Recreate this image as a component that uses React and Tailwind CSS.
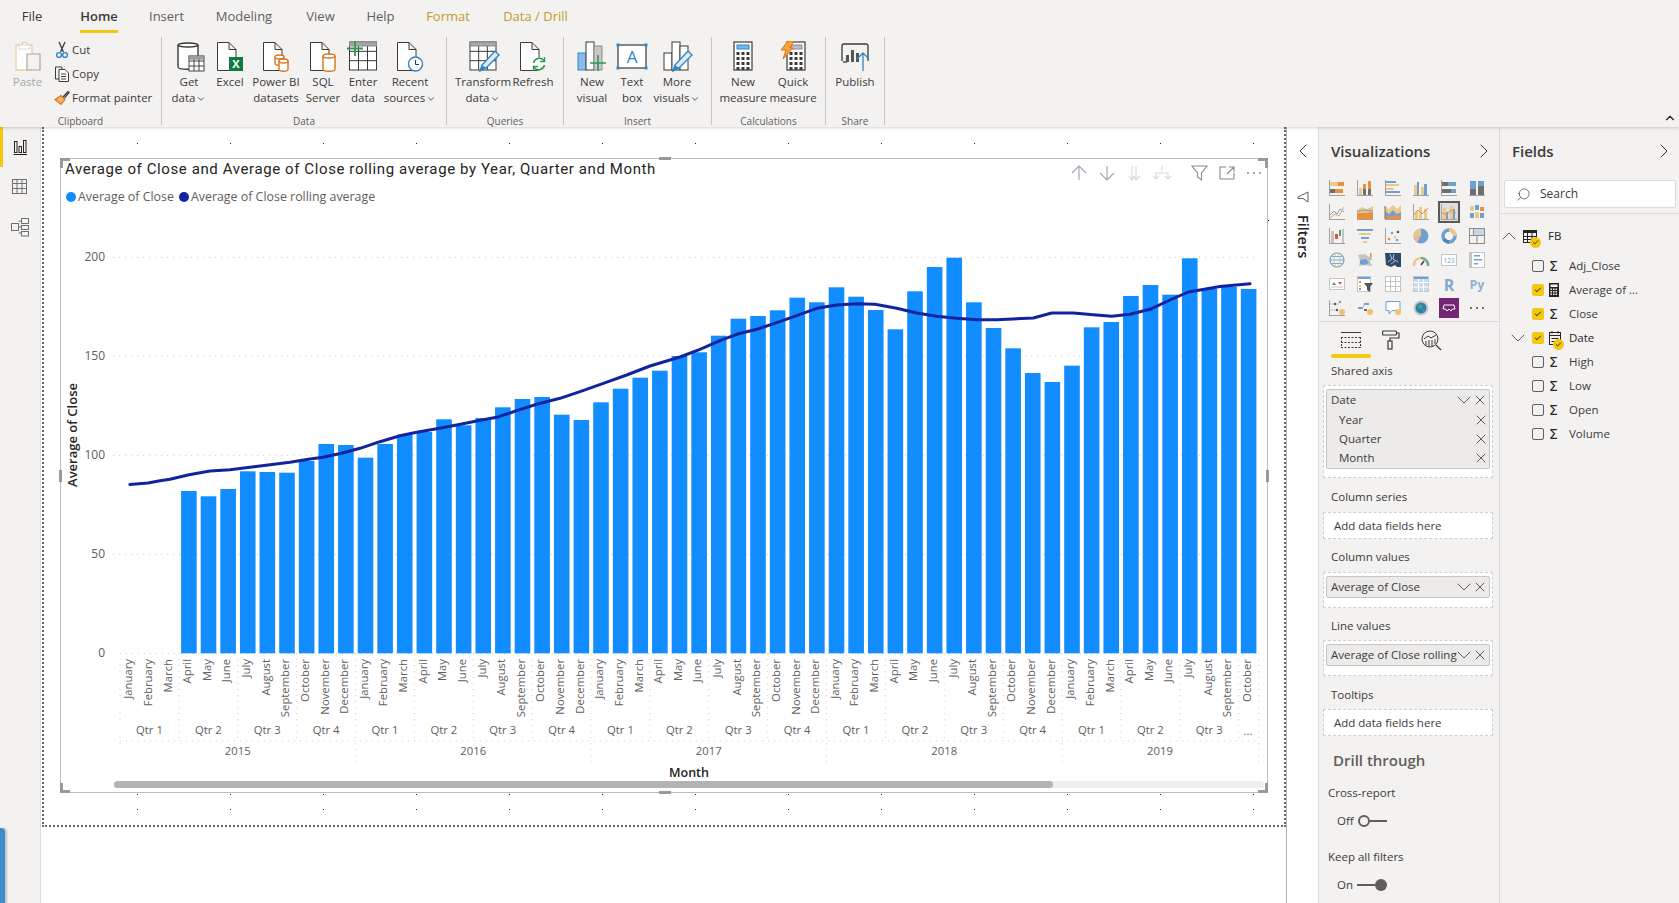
import React from 'react';
import { ChevronUp, ChevronDown, ChevronLeft, ChevronRight, X, Search, Check } from 'lucide-react';

const INK = '#3b3a39';
const DOC = 'M1.5 1.5H13L20 8.5V29.5H1.5Z M13 1.5V8.5H20';

const Svg = ({ w, h = 31, children, ...rest }) => (
  <svg width={w} height={h} viewBox={`0 0 ${w} ${h}`} fill="none" {...rest}>{children}</svg>
);

const Table = ({ x, y, w, h, head = 0, cols = 3, rows = 3, stroke = INK }) => {
  const lines = [];
  for (let i = 1; i < cols; i++) lines.push(<path key={`c${i}`} d={`M${x + (w * i) / cols} ${y}V${y + h}`} />);
  for (let i = 1; i < rows; i++) lines.push(<path key={`r${i}`} d={`M${x} ${y + (h * i) / rows}H${x + w}`} />);
  return (
    <g stroke={stroke} fill="none" strokeWidth="1">
      <rect x={x} y={y} width={w} height={h} fill="#fff" />
      {lines}
      {head > 0 && <rect x={x} y={y} width={w} height={head} fill="#a6a6a6" stroke="#8a8a8a" />}
    </g>
  );
};

const Pencil = ({ dx = 0, dy = 0 }) => (
  <g transform={`translate(${dx} ${dy})`}>
    <path d="M2 24 L4 18 L17 4 L21 8 L8 21 Z" fill="#dcebf7" stroke="#2e86c9" strokeWidth="1.4" />
    <path d="M2 24 L4 18 L8 21 Z" fill="#2e86c9" />
  </g>
);

const Cyl = ({ x, y, w, h, stroke = '#d9731c' }) => (
  <g stroke={stroke} strokeWidth="1.4" fill="#fff">
    <path d={`M${x} ${y + 2}V${y + h - 2}C${x} ${y + h + 1} ${x + w} ${y + h + 1} ${x + w} ${y + h - 2}V${y + 2}`} />
    <ellipse cx={x + w / 2} cy={y + 2} rx={w / 2} ry="2" />
  </g>
);

const PasteIcon = () => (
  <Svg w={28}>
    <path d="M2 4H8V2.5C8 1 13 1 13 2.5V4H18V29H2Z" fill="#fff" stroke="#f0cda4" strokeWidth="1.3" />
    <rect x="5" y="4" width="11" height="4" fill="#fff" stroke="#d8d8d8" />
    <path d="M13 13H26V29H13Z" fill="#f3f2f1" stroke="#a8a8a8" strokeWidth="1.2" />
  </Svg>
);
const CutIcon = () => (
  <Svg w={16} h={18}>
    <path d="M5 1L9.5 11M11 1L6.5 11" stroke={INK} strokeWidth="1.3" />
    <circle cx="5" cy="14" r="2.4" stroke="#2e86c9" strokeWidth="1.4" />
    <circle cx="11" cy="14" r="2.4" stroke="#2e86c9" strokeWidth="1.4" />
  </Svg>
);
const CopyIcon = () => (
  <Svg w={16} h={18}>
    <path d="M5 14H1.5V2H8V4" stroke={INK} strokeWidth="1" />
    <path d="M5 4.5H11L14.5 8V16.5H5Z M7 9H12M7 11.5H12M7 14H12" stroke={INK} strokeWidth="1" fill="#fff" />
  </Svg>
);
const PainterIcon = () => (
  <Svg w={16} h={16}>
    <path d="M9 7L14 1.5L15 2.5L10.5 8" stroke={INK} strokeWidth="1.2" />
    <path d="M7 5.5L11 9.5L7 14.5L1 9.5Z" fill="#f3b36a" stroke="#d9731c" strokeWidth="1.1" />
  </Svg>
);
const GetDataIcon = () => (
  <Svg w={28} className="ml-[3px]">
    <Cyl x={1} y={2} w={20} h={26} stroke={INK} />
    <Table x={12} y={15} w={15} h={15} head={3} cols={3} rows={3} stroke="#444" />
  </Svg>
);
const ExcelIcon = () => (
  <Svg w={28}>
    <path d={DOC} stroke={INK} fill="#fff" />
    <rect x="13" y="16" width="14" height="14" fill="#107c41" />
    <text x="20" y="27" fill="#fff" fontSize="11" fontWeight="700" textAnchor="middle">X</text>
  </Svg>
);
const DatasetsIcon = () => (
  <Svg w={28}>
    <path d={DOC} stroke={INK} fill="#fff" />
    <Cyl x={13} y={14} w={9} h={10} />
    <Cyl x={17} y={18} w={9} h={12} />
  </Svg>
);
const SqlIcon = () => (
  <Svg w={28}>
    <path d={DOC} stroke={INK} fill="#fff" />
    <Cyl x={14} y={13} w={12} h={17} />
  </Svg>
);
const EnterIcon = () => (
  <Svg w={30} className="-ml-[2px]">
    <Table x={2.5} y={1} w={27} h={28} head={4} cols={3} rows={3} />
    <path d="M8 0V15M0 7.5H16" stroke="#2f9a4f" strokeWidth="1.8" />
  </Svg>
);
const RecentIcon = () => (
  <Svg w={28}>
    <path d={DOC} stroke={INK} fill="#fff" />
    <circle cx="19.5" cy="23" r="7" fill="#fff" stroke="#2e86c9" strokeWidth="1.4" />
    <path d="M19.5 19V23.5H23" stroke={INK} />
  </Svg>
);
const TransformIcon = () => (
  <Svg w={32} className="ml-[3px]">
    <Table x={1} y={1} w={26} h={28} head={4} cols={3} rows={3} />
    <Pencil dx={9} dy={6} />
  </Svg>
);
const RefreshIcon = () => (
  <Svg w={28}>
    <path d={DOC} stroke={INK} fill="#fff" />
    <circle cx="20" cy="23" r="6" fill="#fff" stroke="#fff" />
    <path d="M14.5 22A6 6 0 0 1 25 19.5M25.5 24A6 6 0 0 1 15 26.5" stroke="#2f9a4f" strokeWidth="1.6" />
    <path d="M25.5 16V20.5H21M14.5 30V25.5H19" stroke="#2f9a4f" strokeWidth="1.4" />
  </Svg>
);
const NewVisualIcon = () => (
  <Svg w={30}>
    <rect x="1" y="12" width="8" height="17" fill="#86bdec" stroke="#2e86c9" />
    <rect x="9" y="1" width="8" height="28" fill="#fff" stroke={INK} />
    <rect x="17" y="5" width="8" height="24" fill="#c8c8c8" stroke="#8a8a8a" />
    <path d="M21 14V30M13 22H29" stroke="#2f9a4f" strokeWidth="1.6" />
  </Svg>
);
const TextBoxIcon = () => (
  <Svg w={32}>
    <rect x="2" y="4" width="28" height="23" fill="#fff" stroke={INK} strokeWidth="1.2" />
    {[[2, 4], [30, 4], [2, 27], [30, 27]].map(([x, y]) => (
      <rect key={`${x}${y}`} x={x - 1.5} y={y - 1.5} width="3" height="3" fill="#2e86c9" />
    ))}
    <text x="16" y="22" fill="#2e86c9" fontSize="17" textAnchor="middle">A</text>
  </Svg>
);
const MoreVisualsIcon = () => (
  <Svg w={30} className="ml-[2px]">
    <rect x="1" y="12" width="8" height="17" fill="#fff" stroke={INK} />
    <rect x="9" y="1" width="8" height="28" fill="#fff" stroke={INK} />
    <rect x="17" y="5" width="8" height="24" fill="#fff" stroke={INK} />
    <Pencil dx={8} dy={6} />
  </Svg>
);
const Calc = ({ x }) => (
  <g>
    <rect x={x} y="1" width="18" height="28" fill="#fff" stroke={INK} strokeWidth="1.2" />
    {[8, 13, 18, 23].map((y) => [3, 8, 13].map((dx) => (
      <rect key={`${y}-${dx}`} x={x + dx - 0.5} y={y + 3} width="3" height="3" fill={INK} />
    )))}
  </g>
);
const MeasureIcon = () => (
  <Svg w={20}>
    <Calc x={1} />
    <rect x="4" y="4" width="12" height="4" fill="#7cb6ea" stroke="#2e86c9" />
  </Svg>
);
const QuickIcon = () => (
  <Svg w={26}>
    <Calc x={7} />
    <rect x="10" y="4" width="12" height="4" fill="#bdbdbd" stroke="#8a8a8a" />
    <path d="M8 0H14L10 7H13L3 18L6 9H1Z" fill="#f7a531" stroke="#d9731c" />
  </Svg>
);
const PublishIcon = () => (
  <Svg w={32}>
    <path d="M3 20V5C3 3 4 3 5 3H27C28 3 29 3 29 5V20" stroke={INK} strokeWidth="1.3" />
    <path d="M4 21H8" stroke={INK} strokeWidth="1.3" />
    <rect x="7" y="14" width="3" height="7" fill="#555" />
    <rect x="12" y="9" width="3" height="12" fill="#555" />
    <rect x="17" y="12" width="3" height="9" fill="#555" />
    <path d="M24 30V12M18 18L24 12L30 18" stroke="#2e86c9" strokeWidth="1.3" />
  </Svg>
);

const Caret = () => <ChevronDown size={10} strokeWidth={2} className="inline ml-[1px]" />;

const RibbonBtn = ({ className, icon, l1, l2, caret }) => (
  <div className={`flex flex-col items-center shrink-0 ${className}`}>
    <div className="h-[31px] flex items-center justify-center">{icon}</div>
    <div className="mt-[2px] text-[11.5px] leading-[16px] text-[#3b3a39] whitespace-nowrap text-center">
      <div>{l1}</div>
      {l2 && <div>{l2}{caret && <Caret />}</div>}
    </div>
  </div>
);

const Group = ({ className, label, children }) => (
  <div className={`shrink-0 h-[88px] mt-[4px] border-r border-[#c8c6c4] flex flex-col ${className}`}>
    <div className="flex pt-[4px]">{children}</div>
    <div className="mt-auto -mb-[2px] text-[10px] leading-[12px] text-center text-[#605e5c]">{label}</div>
  </div>
);

const SmallBtn = ({ icon, children }) => (
  <div className="flex items-center h-[24px] text-[11.5px] text-[#3b3a39] whitespace-nowrap">
    <div className="w-[20px] flex justify-center">{icon}</div>
    {children}
  </div>
);

const TABS = [
  ['File', 'ml-[21px] w-[22px] text-[#3b3a39]'],
  ['Home', 'ml-[37px] w-[38px] font-semibold text-[#3b3a39] border-b-[3px] border-[#f2c811]'],
  ['Insert', 'ml-[31px] w-[34px] text-[#605e5c]'],
  ['Modeling', 'ml-[32px] w-[58px] text-[#605e5c]'],
  ['View', 'ml-[33px] w-[29px] text-[#605e5c]'],
  ['Help', 'ml-[31px] w-[29px] text-[#605e5c]'],
  ['Format', 'ml-[31px] w-[44px] text-[#c19c2c]'],
  ['Data / Drill', 'ml-[32px] w-[67px] text-[#c19c2c]'],
];

const Ribbon = () => (
  <div className="shrink-0 relative z-10 bg-[#f3f2f1] shadow-[0_1px_3px_rgba(0,0,0,0.18)]">
    <div className="h-[33px] flex">
      {TABS.map(([t, c]) => (
        <div key={t} className={`h-[33px] shrink-0 text-[13px] leading-[32px] text-center whitespace-nowrap ${c}`}>{t}</div>
      ))}
    </div>
    <div className="h-[94px] flex">
      <Group className="w-[162px]" label="Clipboard">
        <RibbonBtn className="w-[49px] ml-[3px] text-[#a19f9d]" icon={<PasteIcon />} l1={<span className="text-[#a6a6a6]">Paste</span>} />
        <div className="-mt-[3px]">
          <SmallBtn icon={<CutIcon />}>Cut</SmallBtn>
          <SmallBtn icon={<CopyIcon />}>Copy</SmallBtn>
          <SmallBtn icon={<PainterIcon />}>Format painter</SmallBtn>
        </div>
      </Group>
      <Group className="w-[285px]" label="Data">
        <RibbonBtn className="w-[40px] ml-[7px]" icon={<GetDataIcon />} l1="Get" l2="data" caret />
        <RibbonBtn className="w-[42px]" icon={<ExcelIcon />} l1="Excel" />
        <RibbonBtn className="w-[50px]" icon={<DatasetsIcon />} l1="Power BI" l2="datasets" />
        <RibbonBtn className="w-[44px]" icon={<SqlIcon />} l1="SQL" l2="Server" />
        <RibbonBtn className="w-[36px]" icon={<EnterIcon />} l1="Enter" l2="data" />
        <RibbonBtn className="w-[58px]" icon={<RecentIcon />} l1="Recent" l2="sources" caret />
      </Group>
      <Group className="w-[117px]" label="Queries">
        <RibbonBtn className="w-[56px] ml-[8px]" icon={<TransformIcon />} l1="Transform" l2="data" caret />
        <RibbonBtn className="w-[44px]" icon={<RefreshIcon />} l1="Refresh" />
      </Group>
      <Group className="w-[148px]" label="Insert">
        <RibbonBtn className="w-[44px] ml-[6px]" icon={<NewVisualIcon />} l1="New" l2="visual" />
        <RibbonBtn className="w-[36px]" icon={<TextBoxIcon />} l1="Text" l2="box" />
        <RibbonBtn className="w-[54px]" icon={<MoreVisualsIcon />} l1="More" l2="visuals" caret />
      </Group>
      <Group className="w-[114px]" label="Calculations">
        <RibbonBtn className="w-[50px] ml-[6px]" icon={<MeasureIcon />} l1="New" l2="measure" />
        <RibbonBtn className="w-[50px]" icon={<QuickIcon />} l1="Quick" l2="measure" />
      </Group>
      <Group className="w-[59px]" label="Share">
        <RibbonBtn className="w-[58px]" icon={<PublishIcon />} l1="Publish" />
      </Group>
      <div className="ml-auto self-end pb-[2px] pr-[2px]"><ChevronUp size={14} color="#252423" /></div>
    </div>
  </div>
);

const LeftRail = () => (
  <div className="w-[41px] shrink-0 bg-[#f3f2f1] border-r border-[#dcdcdc] relative">
    <div className="absolute left-0 top-0 w-[3px] h-[40px] bg-[#f2c811]" />
    <div className="flex flex-col items-center pr-px pt-[12px]">
      <svg width="16" height="16" viewBox="0 0 16 16" fill="none" stroke="#252423" strokeWidth="1">
        <path d="M1.5 15.5H15" /><rect x="2.5" y="2.5" width="2.5" height="11" /><rect x="7" y="7.5" width="2.5" height="6" /><rect x="11.5" y="1.5" width="2.5" height="12" />
      </svg>
      <svg className="mt-[23px]" width="17" height="17" viewBox="0 0 17 17" fill="none" stroke="#707070" strokeWidth="1">
        <rect x="1.5" y="1.5" width="14" height="14" /><path d="M1.5 5.5H15.5M1.5 10.5H15.5M6 1.5V15.5M11 1.5V15.5" />
      </svg>
      <svg className="mt-[22px]" width="20" height="20" viewBox="0 0 20 20" fill="none" stroke="#707070" strokeWidth="1">
        <rect x="1.5" y="6.5" width="7" height="7" /><rect x="11.5" y="1.5" width="7" height="5" /><rect x="11.5" y="8.5" width="7" height="4" /><rect x="11.5" y="14.5" width="7" height="4.5" /><path d="M8.5 10H11.5M8.5 4H11.5M8.5 16H11.5" />
      </svg>
    </div>
    <div className="absolute left-0 top-[701px] w-[5px] h-[80px] bg-[#3f8bd0] rounded-tr-[4px] shadow-[2px_0_2px_rgba(0,0,0,0.2)]" />
  </div>
);

// bar tops read off the picture, Apr 2015 to Oct 2019
const TOPS = [491, 496.3, 489, 471.3, 472, 472.7, 461, 444, 445, 457.7, 444, 434.7, 432, 419.3, 425.3, 418, 407.3, 399, 397, 414.7, 420, 402.3, 388.7, 377.7, 370.7, 356, 352.3, 335.7, 318.7, 316, 310.3, 297.7, 302.3, 287.3, 296.7, 310, 329.3, 291.3, 267, 257.7, 302.3, 328, 348.3, 373, 382, 365.7, 327.3, 322, 296, 285, 294.7, 258.3, 289, 287, 289];
const LINE = '129.8,484.5 148,483 160,480.7 170,479.3 189,474.7 210,471 230,469.7 250,467.3 270,464.7 290,462.3 310,459 323,457.3 341.7,453.3 360,448.3 380,441.7 400,435.7 416.7,432.3 436.7,428.7 456.7,425 476.7,421 496.7,417.3 516.7,410.7 536.7,404.3 560,398.3 580,391.7 603.3,383.3 626.7,375 650,366 680,357 700,349.3 720,340.7 736.7,334.3 756.7,329.3 776.7,322.7 796.7,315.7 816.7,308.3 836.7,305 856.7,303.7 875,304.3 896.7,308.3 916.7,313 936.7,316.3 956.7,318.3 976.7,319.7 996.7,319.7 1033.3,318 1051.7,313 1073.3,313 1093.3,314.7 1111.7,316.3 1130,314.3 1150,309.3 1170,300 1188.3,292 1200,290 1220,286.5 1250,283.8';
const MONTHS = ['January', 'February', 'March', 'April', 'May', 'June', 'July', 'August', 'September', 'October', 'November', 'December'];
const X0 = 120;
const P = 19.625;
const ZERO = 653.3;

const Chart = () => {
  const all = Array.from({ length: 58 }, (_, i) => MONTHS[i % 12]);
  const quarters = Array.from({ length: 20 }, (_, i) => i);
  const dot = { stroke: '#cfcfcf', strokeDasharray: '1 5', strokeWidth: 1 };
  return (
    <svg className="block" width="1206" height="564" viewBox="61 215 1206 564" fontSize="11.3" fill="#605e5c">
      {[257.3, 356.3, 455.3, 554.3].map((y) => <line key={y} x1="113" x2="1258" y1={y} y2={y} {...dot} />)}
      {[[200, 257.3], [150, 356.3], [100, 455.3], [50, 554.3], [0, 653.3]].map(([v, y]) => (
        <text key={v} x="105" y={y + 4} textAnchor="end" fontSize="12">{v}</text>
      ))}
      <text transform="translate(77 435) rotate(-90)" textAnchor="middle" fontSize="13" fontWeight="600" fill="#252423">Average of Close</text>

      <line x1="120" x2="1258.7" y1="653.5" y2="653.5" {...dot} />
      <line x1="120" x2="1258.7" y1="741" y2="741" {...dot} />
      {quarters.map((q) => {
        const x = X0 + q * 3 * P;
        return <line key={q} x1={x} x2={x} y1="653" y2={q % 4 === 0 ? 762 : 741} {...dot} />;
      })}
      <line x1="1258.7" x2="1258.7" y1="653" y2="762" {...dot} />

      {TOPS.map((t, i) => (
        <rect key={i} x={X0 + (i + 3) * P + 2.2} y={t} width="15.6" height={ZERO - t} fill="#118dff" />
      ))}
      <polyline points={LINE} fill="none" stroke="#12239e" strokeWidth="3" strokeLinejoin="round" strokeLinecap="round" />

      {all.map((m, i) => {
        const x = X0 + (i + 0.5) * P - 2;
        return (
          <text key={i} transform={`translate(${x} 659) rotate(-90)`} textAnchor="end" dominantBaseline="central">{m}</text>
        );
      })}
      {quarters.slice(0, 19).map((q) => (
        <text key={q} x={X0 + (q + 0.5) * 3 * P} y="734" textAnchor="middle">{`Qtr ${(q % 4) + 1}`}</text>
      ))}
      <text x="1248" y="735" textAnchor="middle">...</text>
      {[2015, 2016, 2017, 2018].map((y, i) => (
        <text key={y} x={X0 + (i * 12 + 6) * P} y="755" textAnchor="middle">{y}</text>
      ))}
      <text x="1160" y="755" textAnchor="middle">2019</text>
      <text x="689" y="776.5" textAnchor="middle" fontSize="12.5" fontWeight="600" fill="#252423">Month</text>
    </svg>
  );
};

const VisualHeader = () => (
  <div className="absolute -right-[1px] top-[5px] flex items-center">
    <svg width="198" height="18" viewBox="0 0 198 18" fill="none" strokeWidth="1.1">
      <g stroke="#a79fb0">
        <path d="M9 16V2M2 9L9 2L16 9" />
        <path d="M37 2V16M30 9L37 16L44 9" />
      </g>
      <g stroke="#ddd9d6">
        <path d="M62 2V16M66 2V16M59 12L62 16L65 12M63 12L66 16L70 12" />
        <path d="M92 2V7M86 14V9H98V14M83 12L86 15L89 12M95 12L98 15L101 12" />
      </g>
      <g stroke="#8a8a8a">
        <path d="M122 2H137L131.5 9V16L127.5 13V9Z" />
        <path d="M156 3H150V15H164V9M157 10L164 3M159 3H164V8" />
      </g>
      <g fill="#8a8a8a"><circle cx="178" cy="9" r="1" /><circle cx="184" cy="9" r="1" /><circle cx="190" cy="9" r="1" /></g>
    </svg>
  </div>
);

const HANDLE = 'absolute w-[10px] h-[10px] border-[#999999]';

const Visual = () => (
  <div className="relative ml-[16px] w-[1208px] h-[635px] border border-[#bdbdbd] bg-white">
    <div className={`${HANDLE} -left-[1px] -top-[1px] border-l-[3px] border-t-[3px]`} />
    <div className={`${HANDLE} -right-[1px] -top-[1px] border-r-[3px] border-t-[3px]`} />
    <div className={`${HANDLE} -left-[1px] -bottom-[1px] border-l-[3px] border-b-[3px]`} />
    <div className={`${HANDLE} -right-[1px] -bottom-[1px] border-r-[3px] border-b-[3px]`} />
    <div className="absolute left-[598px] -top-[2px] w-[12px] h-[3px] bg-[#999999]" />
    <div className="absolute left-[598px] -bottom-[2px] w-[12px] h-[3px] bg-[#999999]" />
    <div className="absolute -left-[2px] top-[311px] w-[3px] h-[12px] bg-[#999999]" />
    <div className="absolute -right-[2px] top-[311px] w-[3px] h-[12px] bg-[#999999]" />
    <div className="absolute -right-[2px] top-[61px] w-px h-px bg-black" />
    <VisualHeader />

    <div className="h-[21px] pl-[4px] text-[15px] leading-[20px] text-[#252423] font-['Roboto',sans-serif] tracking-[0.6px] whitespace-nowrap">
      Average of Close and Average of Close rolling average by Year, Quarter and Month
    </div>
    <div className="flex items-center h-[20px] mt-[7px] pl-[5px] text-[12.4px] text-[#605e5c] whitespace-nowrap">
      <span className="w-[10px] h-[10px] rounded-full bg-[#118dff]" />
      <span className="ml-[2px]">Average of Close</span>
      <span className="ml-[5px] w-[10px] h-[10px] rounded-full bg-[#12239e]" />
      <span className="ml-[2px]">Average of Close rolling average</span>
    </div>
    <div className="mt-[8px]"><Chart /></div>
    <div className="mt-[2px] ml-[53px] w-[1150px] h-[7px] rounded-full bg-[#efefef]">
      <div className="w-[939px] h-[7px] rounded-full bg-[#b3b3b3]" />
    </div>
  </div>
);

const DotRow = ({ className = '' }) => (
  <div className={`flex gap-[92px] pl-[93px] h-px ${className}`}>
    {Array.from({ length: 13 }, (_, i) => <span key={i} className="w-px h-px bg-[#252423]" />)}
  </div>
);

const Canvas = () => (
  <div className="w-[1245px] shrink-0 bg-white">
    <div className="ml-px h-[700px] pt-[16px] border-x-2 border-b-2 border-dotted border-[#666666]">
      <DotRow />
      <div className="mt-[14px]"><Visual /></div>
      <DotRow className="mt-px" />
      <DotRow className="mt-[14px]" />
    </div>
  </div>
);

const BigChev = ({ Icon }) => <span className="-mx-[8px] flex"><Icon size={24} color="#3b3a39" strokeWidth={1} /></span>;

const FiltersPane = () => (
  <div className="w-[32px] shrink-0 bg-white border-l border-[#b3b3b3] flex flex-col items-center">
    <div className="h-[48px] flex items-center"><BigChev Icon={ChevronLeft} /></div>
    <svg className="mt-[16px]" width="12" height="12" viewBox="0 0 12 12" fill="none" stroke="#605e5c">
      <path d="M11 1V11L6 7.5H1L1 6L11 1Z" />
    </svg>
    <div className="mt-[12px] [writing-mode:vertical-rl] text-[14.5px] font-semibold text-[#252423] leading-[16px]">Filters</div>
  </div>
);

const O = '#e8913a';
const B = '#6fa0d0';
const T = '#ecc88d';
const K = '#6e6e6e';
const L = '#c4c4c4';
const Bar = ({ x, y, w, h, c }) => <rect x={x} y={y} width={w} height={h} fill={c} />;
const AxisL = () => <path d="M0.5 0V16M0 15.5H16" stroke="#a0a0a0" />;
const AxisB = () => <path d="M0 15.5H16" stroke="#a0a0a0" />;

const GALLERY = [
  <><AxisL /><Bar x={1} y={2} w={8} h={4} c={T} /><Bar x={9} y={2} w={6} h={4} c={O} /><Bar x={1} y={9} w={5} h={4} c={K} /><Bar x={6} y={9} w={8} h={4} c={O} /></>,
  <><AxisL /><Bar x={2} y={8} w={3} h={7} c={T} /><Bar x={6} y={4} w={3} h={11} c={K} /><Bar x={6} y={4} w={3} h={5} c={O} /><Bar x={11} y={1} w={3} h={14} c={K} /><Bar x={11} y={1} w={3} h={8} c={O} /></>,
  <><AxisL /><Bar x={1} y={1} w={10} h={2} c={B} /><Bar x={1} y={4} w={13} h={2} c={T} /><Bar x={1} y={8} w={8} h={2} c={T} /><Bar x={1} y={11} w={14} h={2} c={B} /></>,
  <><AxisB /><Bar x={1} y={5} w={3} h={10} c={T} /><Bar x={4} y={2} w={2} h={13} c={B} /><Bar x={8} y={7} w={3} h={8} c={T} /><Bar x={11} y={4} w={3} h={11} c={B} /></>,
  <><AxisL /><Bar x={1} y={2} w={6} h={4} c={K} /><Bar x={7} y={2} w={8} h={4} c={B} /><Bar x={1} y={9} w={9} h={4} c={K} /><Bar x={10} y={9} w={5} h={4} c={B} /></>,
  <><AxisB /><Bar x={1} y={1} w={6} h={14} c={B} /><Bar x={1} y={9} w={6} h={6} c={K} /><Bar x={9} y={1} w={6} h={14} c={B} /><Bar x={9} y={6} w={6} h={9} c={K} /></>,
  <><AxisL /><path d="M1 11L5 7L8 10L11 5L15 8" stroke={B} /><path d="M1 14L6 10L10 12L15 3" stroke={O} strokeWidth="0.8" /></>,
  <><AxisB /><path d="M0 6L5 3L10 5L16 2V8L0 9Z" fill={T} /><path d="M0 9L16 8V15H0Z" fill={O} /><path d="M0 8L6 6L16 7" stroke={B} /></>,
  <><AxisB /><path d="M0 2L4 5L8 1L12 5L16 1V8L12 10L8 6L4 10L0 7Z" fill={T} /><path d="M0 7L4 10L8 6L12 10L16 8V15H0Z" fill={B} /><path d="M0 11L5 13L10 11L16 12V15H0Z" fill={O} /><path d="M0 2V15" stroke={K} /></>,
  <><AxisL /><Bar x={2} y={7} w={3} h={8} c={T} /><Bar x={6} y={3} w={3} h={12} c={T} /><Bar x={11} y={5} w={3} h={10} c={T} /><path d="M1 11L5 6L9 10L15 4" stroke={O} /></>,
  <><AxisL /><Bar x={2} y={4} w={3} h={11} c={T} /><Bar x={5} y={8} w={2} h={7} c={B} /><Bar x={9} y={2} w={3} h={13} c={T} /><Bar x={12} y={5} w={2} h={10} c={B} /><path d="M1 9L6 11L10 6L15 9" stroke={O} /></>,
  <><Bar x={1} y={2} w={4} h={5} c={T} /><Bar x={6} y={1} w={4} h={5} c={B} /><Bar x={11} y={3} w={4} h={4} c={O} /><Bar x={1} y={9} w={4} h={5} c={B} /><Bar x={6} y={8} w={4} h={6} c={T} /><Bar x={11} y={9} w={4} h={5} c={B} /></>,
  <><AxisL /><Bar x={2} y={3} w={3} h={12} c={L} /><Bar x={6} y={6} w={3} h={5} c="#d65a4a" /><Bar x={10} y={2} w={2} h={6} c="#5a9e6f" /><Bar x={13} y={1} w={2} h={14} c={L} /></>,
  <><Bar x={0} y={1} w={16} h={2} c={B} /><Bar x={2} y={5} w={12} h={2} c={T} /><Bar x={4} y={9} w={8} h={2} c={B} /><Bar x={6} y={13} w={4} h={2} c={T} /></>,
  <><AxisL /><circle cx="4" cy="11" r="1.3" fill={O} /><circle cx="7" cy="5" r="1.3" fill={B} /><circle cx="10" cy="9" r="1.3" fill={T} /><circle cx="13" cy="4" r="1.3" fill="#555" /><circle cx="12" cy="12" r="1.3" fill={B} /></>,
  <><circle cx="8" cy="8" r="7.5" fill={B} /><path d="M8 8V0.5A7.5 7.5 0 0 0 1 10Z" fill={T} /><path d="M8 8L1 10A7.5 7.5 0 0 0 4 14.5Z" fill="#e9b5a0" /></>,
  <><circle cx="8" cy="8" r="6" stroke={B} strokeWidth="3.5" /><path d="M8 2A6 6 0 0 1 14 8" stroke={T} strokeWidth="3.5" /><path d="M3 11A6 6 0 0 0 8 14" stroke="#4a86c0" strokeWidth="3.5" /></>,
  <><rect x="0.5" y="0.5" width="15" height="15" stroke="#8a8a8a" /><Bar x={4} y={1} w={11} h={6} c="#c4d6e8" /><path d="M0 7.5H16M4.5 0V7.5M8 7.5V16" stroke="#8a8a8a" /></>,
  <><circle cx="8" cy="8" r="7" stroke="#4a90c8" /><ellipse cx="8" cy="8" rx="3" ry="7" stroke={T} /><path d="M1 8H15M2 4.5H14M2 11.5H14" stroke="#7fb0d8" /></>,
  <><path d="M1 3L8 2L12 5L15 4L13 9L15 14L8 13L2 14L3 9Z" fill={L} /><path d="M3 8L9 7L12 11L7 13L3 12Z" fill={B} /><Bar x={13} y={1} w={1.5} h={4} c={O} /><Bar x={13} y={6} w={1.5} h={1.5} c={O} /></>,
  <><path d="M0 1H16V15H12L10 13L6 15L1 13Z" fill="#2f4a66" /><path d="M5 2L7 7L3 10M9 2L8 7L13 10M6 12L10 9" stroke="#a9c5de" /></>,
  <><path d="M1 14A7 7 0 0 1 8 6" stroke={T} strokeWidth="2.5" /><path d="M8 6A7 7 0 0 1 15 14" stroke="#73a88c" strokeWidth="2.5" /><path d="M8 13L11 9" stroke="#444" strokeWidth="1.5" /></>,
  <><rect x="0.5" y="2.5" width="15" height="11" fill="#fff" stroke={L} /><Bar x={1} y={2} w={14} h={1} c={L} /><text x="8" y="10.5" fontSize="6.5" textAnchor="middle" fill={B}>123</text></>,
  <><rect x="0.5" y="0.5" width="15" height="15" fill="#fff" stroke={L} /><Bar x={1} y={1} w={2} h={14} c={L} /><Bar x={5} y={3} w={6} h={1.5} c={B} /><Bar x={5} y={7} w={8} h={1.5} c={B} /><Bar x={5} y={11} w={4} h={1.5} c={B} /></>,
  <><rect x="0.5" y="2.5" width="15" height="11" fill="#fff" stroke={L} /><path d="M3 9L5 6L7 9Z" fill="#5a9e6f" /><path d="M9 6H13L11 9Z" fill="#d65a4a" /><path d="M2 11H14" stroke={L} /></>,
  <><rect x="0.5" y="0.5" width="13" height="15" fill="#fff" stroke={L} /><Bar x={1} y={1} w={12} h={2} c={B} /><Bar x={2} y={5} w={2} h={2} c={O} /><Bar x={2} y={9} w={2} h={2} c={T} /><Bar x={2} y={12} w={2} h={2} c={B} /><path d="M7 7H16L13 11V16L10 14V11Z" fill="#555" /></>,
  <><rect x="0.5" y="0.5" width="15" height="15" fill="#fff" stroke={L} /><path d="M0 5.5H16M0 10.5H16M5.5 0V16M10.5 0V16" stroke={L} /></>,
  <><rect x="0.5" y="0.5" width="15" height="15" fill="#c9dcee" stroke={L} /><Bar x={1} y={1} w={14} h={2} c={B} /><path d="M0 6.5H16M0 11H16M5.5 3V16M10.5 3V16" stroke="#fff" /></>,
  <text x="8" y="14.5" textAnchor="middle" fontSize="16" fontWeight="700" fill="#7ea8d2">R</text>,
  <text x="8" y="13" textAnchor="middle" fontSize="12.5" fontWeight="700" fill="#8fb4d8">Py</text>,
  <><AxisL /><path d="M1 4H6M6 4H10M1 10H8" stroke={L} /><circle cx="6" cy="4" r="1.2" fill="#555" /><circle cx="11" cy="2" r="1.2" fill={B} /><circle cx="8" cy="10" r="1.2" fill="#555" /><circle cx="13" cy="12" r="3" fill="#f0c36a" /></>,
  <><Bar x={1} y={7} w={5} h={2} c={B} /><Bar x={7} y={3} w={5} h={2} c={B} /><Bar x={7} y={9} w={3} h={2} c={K} /><path d="M6 8L7 4" stroke={L} /><circle cx="13" cy="12" r="3" fill="#f0c36a" /></>,
  <><path d="M1 1.5H15V10.5H7L4 14V10.5H1Z" fill="#fff" stroke={B} /><circle cx="13" cy="12" r="3" fill="#f0c36a" /></>,
  <><circle cx="8" cy="8" r="7.5" fill="#c9c9c9" /><circle cx="8" cy="8" r="5.5" fill="#2f7fb8" /><path d="M4 6L8 4L10 7L7 9ZM9 10L12 9L11 12Z" fill="#4fa36a" /></>,
  <><rect x="-2" y="-2" width="20" height="20" fill="#742774" /><path d="M3 5H13L14 9H11.5L10 11L8 9L6 11L4.5 9H2Z" stroke="#fff" fill="none" /></>,
  <g fill="#444"><circle cx="2" cy="8" r="1" /><circle cx="8" cy="8" r="1" /><circle cx="14" cy="8" r="1" /></g>,
];

const VizGallery = () => (
  <div className="mt-px ml-[4px] grid grid-cols-[repeat(6,28px)] auto-rows-[24px]">
    {GALLERY.map((g, i) => (
      <div key={i} className="flex items-center justify-center">
        <div className={i === 10 ? 'w-[22px] h-[22px] border-2 border-[#595959] bg-[#dedede] flex items-center justify-center' : 'flex'}>
          <svg className="overflow-visible" width="16" height="16" viewBox="0 0 16 16" fill="none" strokeWidth="1">{g}</svg>
        </div>
      </div>
    ))}
  </div>
);

const Close = () => <X size={16} color="#605e5c" strokeWidth={1.5} className="shrink-0" />;
const Chev = () => <span className="-mx-[6px] flex shrink-0"><ChevronDown size={24} color="#605e5c" strokeWidth={1} /></span>;

const Well = ({ className, children }) => (
  <div className={`ml-[4px] w-[170px] border border-dashed border-[#cfcfcf] bg-white ${className}`}>{children}</div>
);
const WellLabel = ({ className, children }) => (
  <div className={`ml-[12px] text-[11.5px] leading-[16px] text-[#3b3a39] ${className}`}>{children}</div>
);
const Chip = ({ children }) => (
  <div className="mx-[2px] mt-[3px] h-[22px] pl-[4px] flex items-center bg-[#ecebea] border border-[#c8c6c4] rounded-[2px] text-[11.5px] text-[#3b3a39] whitespace-nowrap">
    <span className="w-[127px] shrink-0">{children}</span>
    <Chev /><span className="ml-[2px]"><Close /></span>
  </div>
);
const Empty = () => <div className="pl-[10px] leading-[25px] text-[11.5px] text-[#3b3a39]">Add data fields here</div>;

const SubField = ({ children }) => (
  <div className="h-[19px] pl-[12px] flex items-center justify-between">{children}<Close /></div>
);

const VizPane = () => (
  <div className="w-[182px] shrink-0 bg-[#f3f2f1] border-x border-[#dcdcdc]">
    <div className="h-[48px] pl-[12px] pr-[11px] flex items-center justify-between">
      <span className="text-[15px] font-semibold text-[#3b3a39]">Visualizations</span>
      <BigChev Icon={ChevronRight} />
    </div>
    <VizGallery />
    <div className="mt-px border-t border-[#dcdcdc] h-[37px] ml-0 flex">
      <div className="ml-[12px] w-[40px] flex flex-col items-center">
        <svg className="mt-[9px]" width="20" height="18" viewBox="0 0 20 18" fill="none" stroke="#3b3a39" strokeWidth="1">
          <path d="M0 1.5H20" /><path d="M0 6.5H20M0 11.5H20M0 16.5H20M0.5 6V17M19.5 6V17" strokeDasharray="2 1.5" />
        </svg>
        <div className="mt-auto h-[4px] w-[40px] rounded-full bg-[#f2c811]" />
      </div>
      <div className="w-[40px] flex justify-center">
        <svg className="mt-[8px]" width="18" height="20" viewBox="0 0 18 20" fill="none" stroke="#3b3a39" strokeWidth="1.2">
          <rect x="0.5" y="1" width="14" height="4" rx="1" /><path d="M14.5 3H17V8H8V11" /><rect x="6" y="11" width="4" height="8" />
        </svg>
      </div>
      <div className="w-[40px] flex justify-center">
        <svg className="mt-[8px]" width="21" height="21" viewBox="0 0 21 21" fill="none" stroke="#3b3a39" strokeWidth="1">
          <circle cx="9" cy="9" r="8" /><path d="M15 15L20 20" strokeWidth="1.3" /><path d="M3 9L7 6L10 8L15 5M5 11V15M8 10V16M11 10V16M14 9V14" />
        </svg>
      </div>
    </div>
    <WellLabel className="mt-[5px]">Shared axis</WellLabel>
    <Well className="mt-[6px] h-[93px]">
      <div className="mx-[2px] mt-[3px] h-[80px] pl-[4px] bg-[#ecebea] border border-[#c8c6c4] rounded-[2px] text-[11.5px] text-[#3b3a39]">
        <div className="h-[20px] flex items-center">
          <span className="w-[127px] shrink-0">Date</span><Chev /><span className="ml-[2px]"><Close /></span>
        </div>
        <div className="-ml-[4px]">
          <SubField>Year</SubField>
          <SubField>Quarter</SubField>
          <SubField>Month</SubField>
        </div>
      </div>
    </Well>
    <WellLabel className="mt-[11px]">Column series</WellLabel>
    <Well className="mt-[7px] h-[27px]"><Empty /></Well>
    <WellLabel className="mt-[10px]">Column values</WellLabel>
    <Well className="mt-[7px] h-[36px]"><Chip>Average of Close</Chip></Well>
    <WellLabel className="mt-[10px]">Line values</WellLabel>
    <Well className="mt-[6px] h-[36px]"><Chip>Average of Close rolling</Chip></Well>
    <WellLabel className="mt-[11px]">Tooltips</WellLabel>
    <Well className="mt-[6px] h-[27px]"><Empty /></Well>
    <div className="mt-[12px] ml-[14px] text-[15px] leading-[24px] font-semibold text-[#605e5c]">Drill through</div>
    <div className="mt-[13px] ml-[9px] text-[11.5px] leading-[16px] text-[#3b3a39]">Cross-report</div>
    <div className="mt-[10px] ml-[18px] h-[20px] flex items-center text-[11.5px] text-[#3b3a39]">
      <span className="w-[21px]">Off</span>
      <span className="w-[12px] h-[12px] rounded-full border-2 border-[#605e5c]" />
      <span className="w-[17px] h-[2px] bg-[#605e5c]" />
    </div>
    <div className="mt-[18px] ml-[9px] text-[11.5px] leading-[16px] text-[#3b3a39]">Keep all filters</div>
    <div className="mt-[10px] ml-[18px] h-[20px] flex items-center text-[11.5px] text-[#3b3a39]">
      <span className="w-[20px]">On</span>
      <span className="w-[18px] h-[2px] bg-[#605e5c]" />
      <span className="w-[12px] h-[12px] rounded-full bg-[#605e5c]" />
    </div>
  </div>
);

const Badge = ({ className }) => (
  <span className={`absolute w-[11px] h-[11px] rounded-full bg-[#f2c811] flex items-center justify-center ${className}`}>
    <Check size={7} strokeWidth={3} color="#252423" />
  </span>
);

const SigmaIcon = () => <span className="w-[12px] text-[14px] leading-none font-['DejaVu_Sans',sans-serif] text-[#252423]">Σ</span>;
const CalcSmall = () => (
  <svg width="10" height="14" viewBox="0 0 10 14"><rect width="10" height="14" fill="#252423" /><rect x="1.5" y="1.5" width="7" height="2.5" fill="#f3f2f1" />
    {[5.5, 8, 10.5].map((y) => [1.5, 4, 6.5].map((x) => <rect key={`${x}-${y}`} x={x} y={y} width="1.5" height="1.5" fill="#f3f2f1" />))}
  </svg>
);
const CalendarIcon = () => (
  <svg width="12" height="14" viewBox="0 0 12 14" fill="none" stroke="#252423"><rect x="0.5" y="1.5" width="11" height="12" /><path d="M0.5 4.5H11.5M2.5 7.5H9.5M2.5 10.5H9.5M3 0V2.5M9 0V2.5" /></svg>
);

const FieldRow = ({ name, checked, icon, chev, bold, badge }) => (
  <div className="h-[24px] pl-[12px] flex items-center relative">
    <span className="w-[20px] flex">{chev && <span className="-mx-[6px] flex"><ChevronDown size={24} color="#605e5c" strokeWidth={1} /></span>}</span>
    <span className={`w-[12px] h-[12px] rounded-[2px] flex items-center justify-center ${checked ? 'bg-[#f2c811]' : 'border border-[#605e5c]'}`}>
      {checked && <Check size={8} strokeWidth={3} color="#252423" />}
    </span>
    <span className="ml-[5px] w-[12px] flex items-center relative">{icon}{badge && <Badge className="-right-[3px] -bottom-[5px]" />}</span>
    <span className={`ml-[8px] text-[11.5px] whitespace-nowrap ${bold ? 'font-medium text-[#252423]' : 'text-[#3b3a39]'}`}>{name}</span>
  </div>
);

const FieldsPane = () => (
  <div className="flex-1 bg-[#f3f2f1]">
    <div className="h-[48px] pl-[12px] pr-[11px] flex items-center justify-between">
      <span className="text-[15px] font-semibold text-[#3b3a39]">Fields</span>
      <BigChev Icon={ChevronRight} />
    </div>
    <div className="mt-[5px] ml-[4px] w-[172px] h-[28px] bg-white border border-[#dcdcdc] rounded-[2px] flex items-center pl-[11px] text-[12px] text-[#3b3a39]">
      <Search size={15} color="#3b3a39" strokeWidth={1.1} className="-scale-x-100" />
      <span className="ml-[9px]">Search</span>
    </div>
    <div className="mt-[5px] border-t border-[#dcdcdc]" />
    <div className="mt-[10px] h-[24px] flex items-center">
      <span className="ml-[3px] w-[13px] flex"><span className="-mx-[6px] flex"><ChevronUp size={24} color="#605e5c" strokeWidth={1} /></span></span>
      <span className="ml-[7px] relative flex">
        <svg width="14" height="13" viewBox="0 0 14 13" fill="none" stroke="#252423"><rect x="0.5" y="0.5" width="13" height="12" /><path d="M0 1.5H14M0 2.5H14M0 6.5H14M0 9.5H14M4.5 1V13M9 1V13" /></svg>
        <Badge className="-right-[4px] -bottom-[5px]" />
      </span>
      <span className="ml-[11px] text-[11.5px] font-medium text-[#252423]">FB</span>
    </div>
    <div className="mt-[6px]">
      <FieldRow name="Adj_Close" icon={<SigmaIcon />} />
      <FieldRow name="Average of ..." checked icon={<CalcSmall />} />
      <FieldRow name="Close" checked icon={<SigmaIcon />} />
      <FieldRow name="Date" checked chev bold icon={<CalendarIcon />} badge />
      <FieldRow name="High" icon={<SigmaIcon />} />
      <FieldRow name="Low" icon={<SigmaIcon />} />
      <FieldRow name="Open" icon={<SigmaIcon />} />
      <FieldRow name="Volume" icon={<SigmaIcon />} />
    </div>
  </div>
);

export default function App() {
  return (
    <div className="w-[1679px] h-[903px] overflow-hidden flex flex-col bg-white font-['Open_Sans',sans-serif]">
      <Ribbon />
      <div className="flex flex-1 min-h-0">
        <LeftRail />
        <Canvas />
        <FiltersPane />
        <VizPane />
        <FieldsPane />
      </div>
    </div>
  );
}
